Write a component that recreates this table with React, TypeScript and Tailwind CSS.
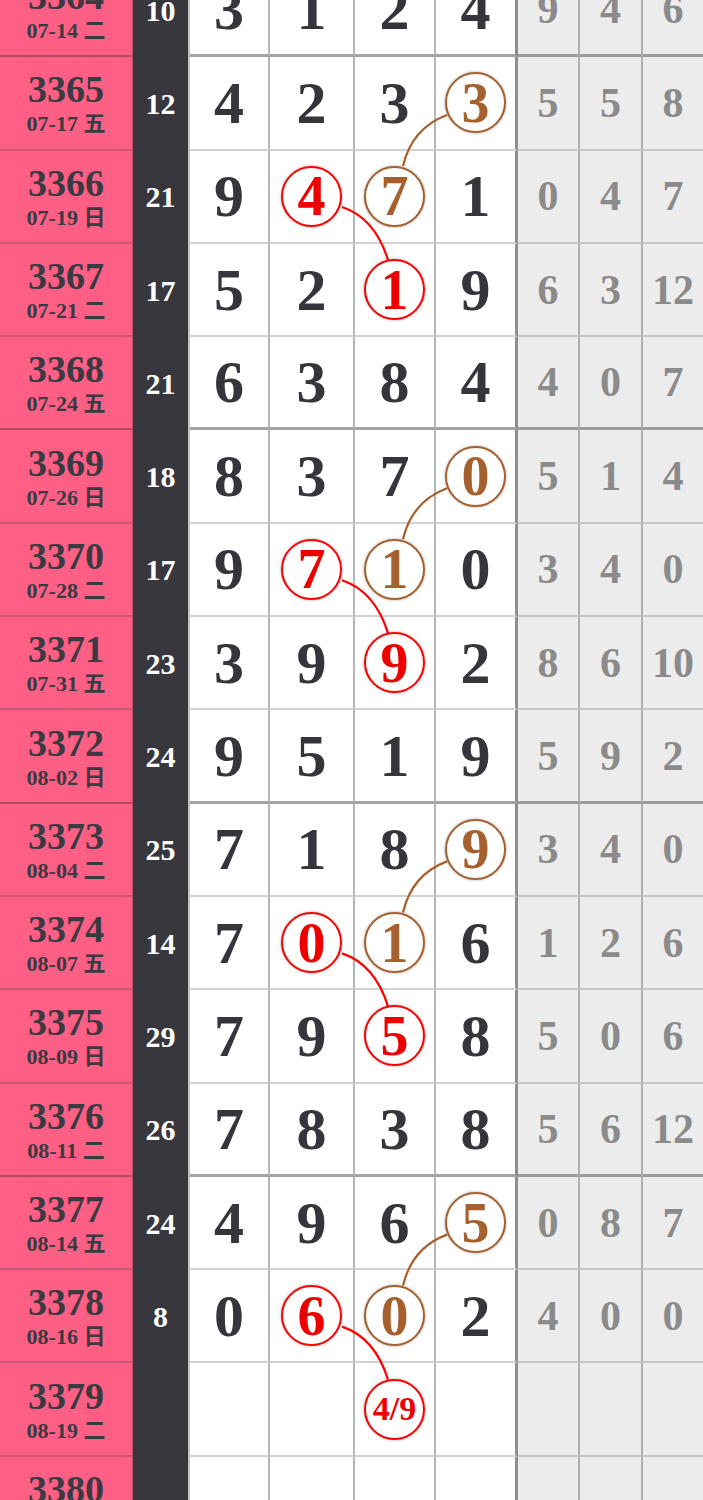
import React from 'react'

type Row = {
  no: string
  date: string
  sum: string
  d: string[]
  g: string[]
  c?: Record<number, 'r' | 'b'>
}

const rows: Row[] = [
  { no: '3364', date: '07-14 二', sum: '10', d: ['3', '1', '2', '4'], g: ['9', '4', '6'] },
  { no: '3365', date: '07-17 五', sum: '12', d: ['4', '2', '3', '3'], g: ['5', '5', '8'], c: { 3: 'b' } },
  { no: '3366', date: '07-19 日', sum: '21', d: ['9', '4', '7', '1'], g: ['0', '4', '7'], c: { 1: 'r', 2: 'b' } },
  { no: '3367', date: '07-21 二', sum: '17', d: ['5', '2', '1', '9'], g: ['6', '3', '12'], c: { 2: 'r' } },
  { no: '3368', date: '07-24 五', sum: '21', d: ['6', '3', '8', '4'], g: ['4', '0', '7'] },
  { no: '3369', date: '07-26 日', sum: '18', d: ['8', '3', '7', '0'], g: ['5', '1', '4'], c: { 3: 'b' } },
  { no: '3370', date: '07-28 二', sum: '17', d: ['9', '7', '1', '0'], g: ['3', '4', '0'], c: { 1: 'r', 2: 'b' } },
  { no: '3371', date: '07-31 五', sum: '23', d: ['3', '9', '9', '2'], g: ['8', '6', '10'], c: { 2: 'r' } },
  { no: '3372', date: '08-02 日', sum: '24', d: ['9', '5', '1', '9'], g: ['5', '9', '2'] },
  { no: '3373', date: '08-04 二', sum: '25', d: ['7', '1', '8', '9'], g: ['3', '4', '0'], c: { 3: 'b' } },
  { no: '3374', date: '08-07 五', sum: '14', d: ['7', '0', '1', '6'], g: ['1', '2', '6'], c: { 1: 'r', 2: 'b' } },
  { no: '3375', date: '08-09 日', sum: '29', d: ['7', '9', '5', '8'], g: ['5', '0', '6'], c: { 2: 'r' } },
  { no: '3376', date: '08-11 二', sum: '26', d: ['7', '8', '3', '8'], g: ['5', '6', '12'] },
  { no: '3377', date: '08-14 五', sum: '24', d: ['4', '9', '6', '5'], g: ['0', '8', '7'], c: { 3: 'b' } },
  { no: '3378', date: '08-16 日', sum: '8', d: ['0', '6', '0', '2'], g: ['4', '0', '0'], c: { 1: 'r', 2: 'b' } },
  { no: '3379', date: '08-19 二', sum: '', d: ['', '', '4/9', ''], g: ['', '', ''], c: { 2: 'r' } },
  { no: '3380', date: '08-21 五', sum: '', d: ['', '', '', ''], g: ['', '', ''] },
]

const ROW_H = 93.3
const digitW = ['w-[80px]', 'w-[85px]', 'w-[81px]', 'w-[82px]']
const greyW = ['w-[62px]', 'w-[63px]', 'w-[60px]']

function Ball({ text, color }: { text: string; color: 'r' | 'b' }) {
  const small = text.length > 1
  return (
    <div
      className={`relative z-10 w-[61px] h-[61px] rounded-full bg-white border-[2.5px] flex items-center justify-center shadow-[0_0_3px_rgba(0,0,0,0.35)] ${
        color === 'r' ? 'border-[#ff0000] text-[#ee0000]' : 'border-[#a5602e] text-[#a5602e]'
      }`}
    >
      <span className={`font-bold leading-none ${small ? 'text-[34px]' : 'text-[56px]'}`}>{text}</span>
    </div>
  )
}

function TableRow({ row, idx }: { row: Row; idx: number }) {
  // heavier rule under every 4th draw
  const group = idx % 4 === 0

  return (
    <div className="flex h-[93.3px]">
      <div
        className={`w-[133px] shrink-0 bg-[#fe5f84] border-r border-r-[#c04c6a] flex flex-col items-center justify-center text-[#3a3a42] ${
          group ? 'border-b-2 border-b-[#b34864]' : 'border-b-2 border-b-[#cf5676]'
        }`}
      >
        <div className="text-[38px] font-bold leading-none">{row.no}</div>
        <div className="mt-[5px] text-[22px] font-bold leading-none">{row.date}</div>
      </div>

      <div className="w-[57px] shrink-0 bg-[#38373e] border-r-2 border-r-[#c4c4c4] flex items-center justify-center text-white text-[30px] font-bold leading-none">
        {row.sum}
      </div>

      {row.d.map((v, i) => (
        <div
          key={i}
          className={`${digitW[i]} shrink-0 bg-white flex items-center justify-center ${
            i === 3 ? 'border-r-[3px] border-r-[#8f8f8f]' : 'border-r-2 border-r-[#b6b6b6]'
          } ${group ? 'border-b-[3px] border-b-[#a3a3a3]' : 'border-b-2 border-b-[#d2d2d2]'}`}
        >
          {row.c && row.c[i] ? (
            <Ball text={v} color={row.c[i]} />
          ) : (
            <span className="text-[60px] font-bold leading-none text-[#36353c]">{v}</span>
          )}
        </div>
      ))}

      {row.g.map((v, i) => (
        <div
          key={i}
          className={`${greyW[i]} shrink-0 bg-[#ececec] flex items-center justify-center text-[42px] font-bold leading-none text-[#8a8a8a] ${
            i < 2 ? 'border-r-2 border-r-[#b0b0b0]' : ''
          } ${group ? 'border-b-[3px] border-b-[#9c9c9c]' : 'border-b-2 border-b-[#c6c6c6]'}`}
        >
          {v}
        </div>
      ))}
    </div>
  )
}

export default function App() {
  const groups = [1, 5, 9, 13]

  return (
    <div className="w-[703px] h-[1500px] overflow-hidden bg-white font-['Liberation_Serif','Noto_Sans_CJK_SC',serif]">
      <div className="relative -mt-[36px]">
        <svg
          className="absolute left-0 top-0 pointer-events-none"
          width={703}
          height={rows.length * ROW_H}
          fill="none"
        >
          {groups.map(g => {
            const y = g * ROW_H
            return (
              <g key={g}>
                <path
                  d={`M447 ${y + 57.7} Q412 ${y + 70.7} 403 ${y + 108.7}`}
                  stroke="#a5602e"
                  strokeWidth={2.2}
                />
                <path
                  d={`M342 ${y + 149.7} Q375 ${y + 160.7} 388 ${y + 202.7}`}
                  stroke="#ff0000"
                  strokeWidth={2.2}
                />
              </g>
            )
          })}
        </svg>
        {rows.map((row, idx) => (
          <TableRow key={row.no} row={row} idx={idx} />
        ))}
      </div>
    </div>
  )
}
